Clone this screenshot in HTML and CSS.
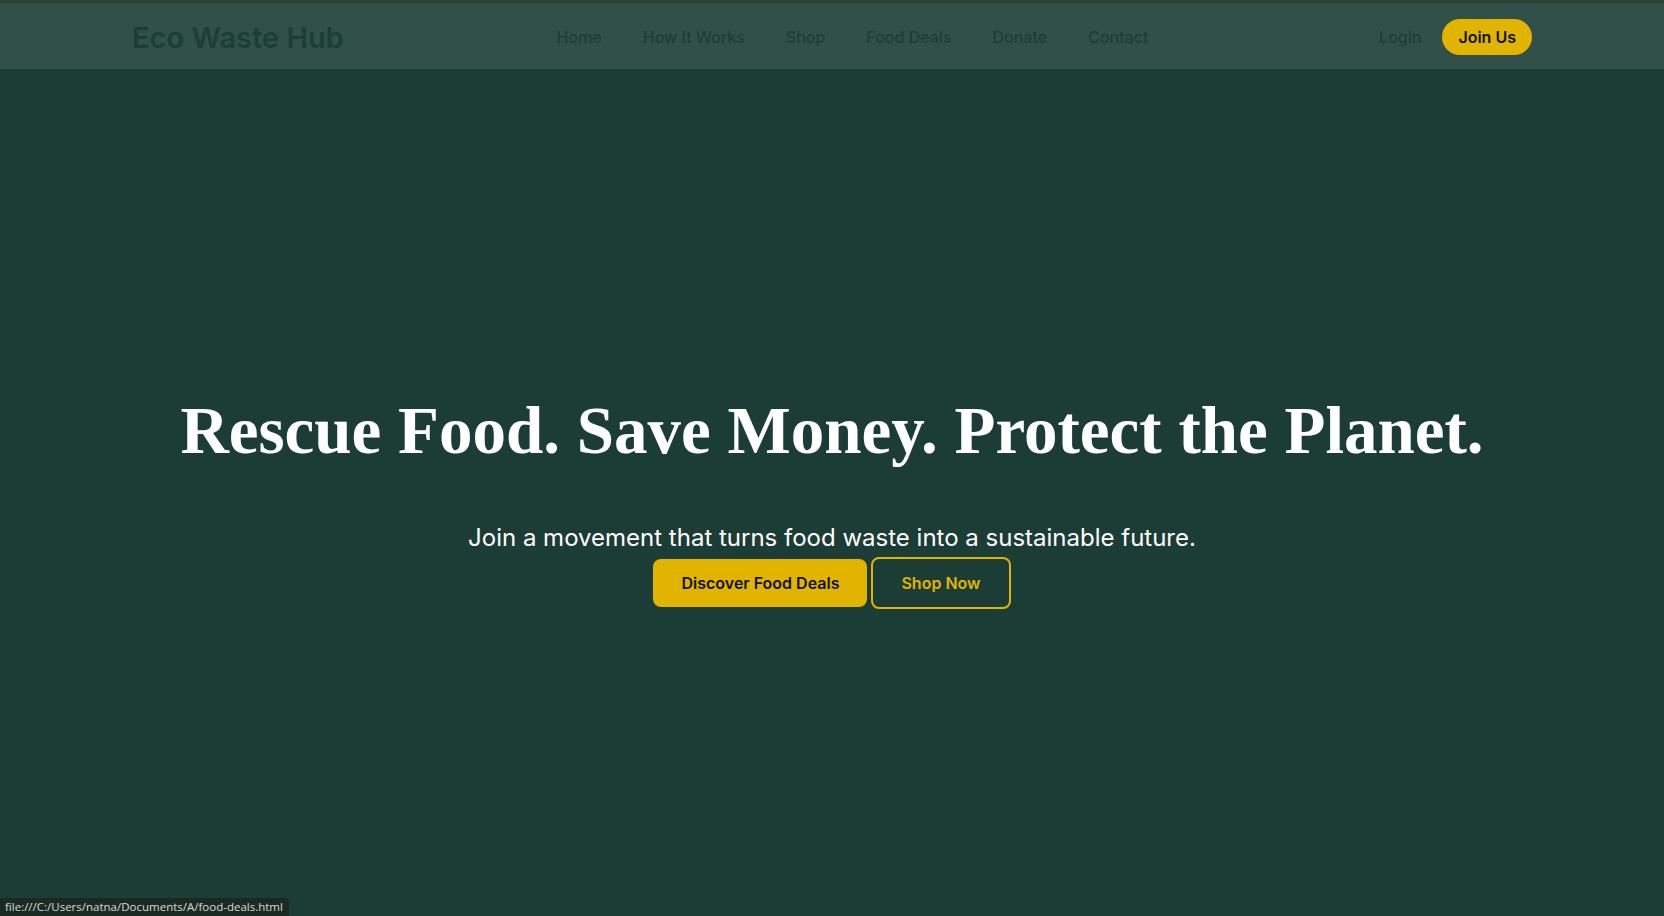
FILE: index.html
```html
<!DOCTYPE html>
<html lang="en">
<head>
<meta charset="utf-8">
<title>Eco Waste Hub</title>
<link rel="stylesheet" href="styles.css">
</head>
<body>
<header class="site-header">
  <nav class="nav">
    <a class="logo" href="#">Eco Waste Hub</a>
    <ul class="nav-links">
      <li><a href="#">Home</a></li>
      <li><a href="#">How It Works</a></li>
      <li><a href="#">Shop</a></li>
      <li><a href="#">Food Deals</a></li>
      <li><a href="#">Donate</a></li>
      <li><a href="#">Contact</a></li>
    </ul>
    <div class="nav-actions">
      <a class="login" href="#">Login</a>
      <a class="join" href="#">Join Us</a>
    </div>
  </nav>
</header>
<main class="hero">
  <div class="hero-content">
    <h1 class="hero-title">Rescue Food. Save Money. Protect the Planet.</h1>
    <p class="hero-sub">Join a movement that turns food waste into a sustainable future.</p>
    <div class="hero-buttons"><a class="btn btn-primary" href="#">Discover Food Deals</a><a class="btn btn-outline" href="#">Shop Now</a></div>
  </div>
</main>
<div class="status-bubble">file:///C:/Users/natna/Documents/A/food-deals.html</div>
</body>
</html>
```

FILE: styles.css
```css
* { box-sizing: border-box; }
html, body { height: 100%; }
body {
  margin: 0;
  background: #1c3c36;
  font-family: Inter, "Liberation Sans", sans-serif;
  display: flex;
  flex-direction: column;
  overflow: hidden;
}
a { text-decoration: none; }

.site-header {
  background: #32504a;
  border-top: 3px solid #343f2f;
}
.nav {
  max-width: 1400px;
  margin: 0 auto;
  height: 66px;
  padding-top: 2px;
  display: flex;
  align-items: center;
  justify-content: space-between;
}
.logo {
  color: #1d3d37;
  font-size: 29px;
  font-weight: 600;
}
.nav-links {
  list-style: none;
  margin: 0 18px 0 0;
  padding: 0;
  display: flex;
  gap: 41px;
}
.nav-links a {
  color: #1d3d37;
  font-size: 16px;
  font-weight: 500;
}
.nav-actions {
  display: flex;
  align-items: center;
  gap: 21px;
}
.login {
  color: #1d3d37;
  font-size: 16px;
  font-weight: 500;
}
.join {
  background: #e1b400;
  color: #111;
  font-size: 16px;
  font-weight: 600;
  line-height: 20px;
  padding: 8px 16px;
  border-radius: 999px;
}

.hero {
  flex: 1;
  display: flex;
  align-items: center;
  justify-content: center;
  text-align: center;
  color: #fff;
  padding-top: 14px;
}
.hero-title {
  margin: 0 0 48px;
  font-family: "Liberation Serif", "DejaVu Serif", serif;
  font-weight: 700;
  font-size: 67px;
  line-height: 1.2;
}
.hero-sub {
  margin: 0;
  font-size: 24px;
  line-height: 38px;
}
.hero-buttons {
  display: flex;
  justify-content: center;
  align-items: center;
  gap: 4px;
}
.btn {
  font-size: 16px;
  font-weight: 600;
  line-height: 24px;
  padding: 12px 28px;
  border-radius: 8px;
}
.btn-primary {
  background: #e1b400;
  color: #111;
}
.btn-outline {
  border: 2px solid #e1b400;
  color: #e1b400;
}

.status-bubble {
  position: fixed;
  left: 0;
  bottom: 0;
  background: #1b2b24;
  color: #d6dcd4;
  font-family: "Open Sans", "Noto Sans", sans-serif;
  font-size: 11.5px;
  line-height: 18px;
  padding: 0 6px 0 5px;
  border-top-right-radius: 3px;
}
```
